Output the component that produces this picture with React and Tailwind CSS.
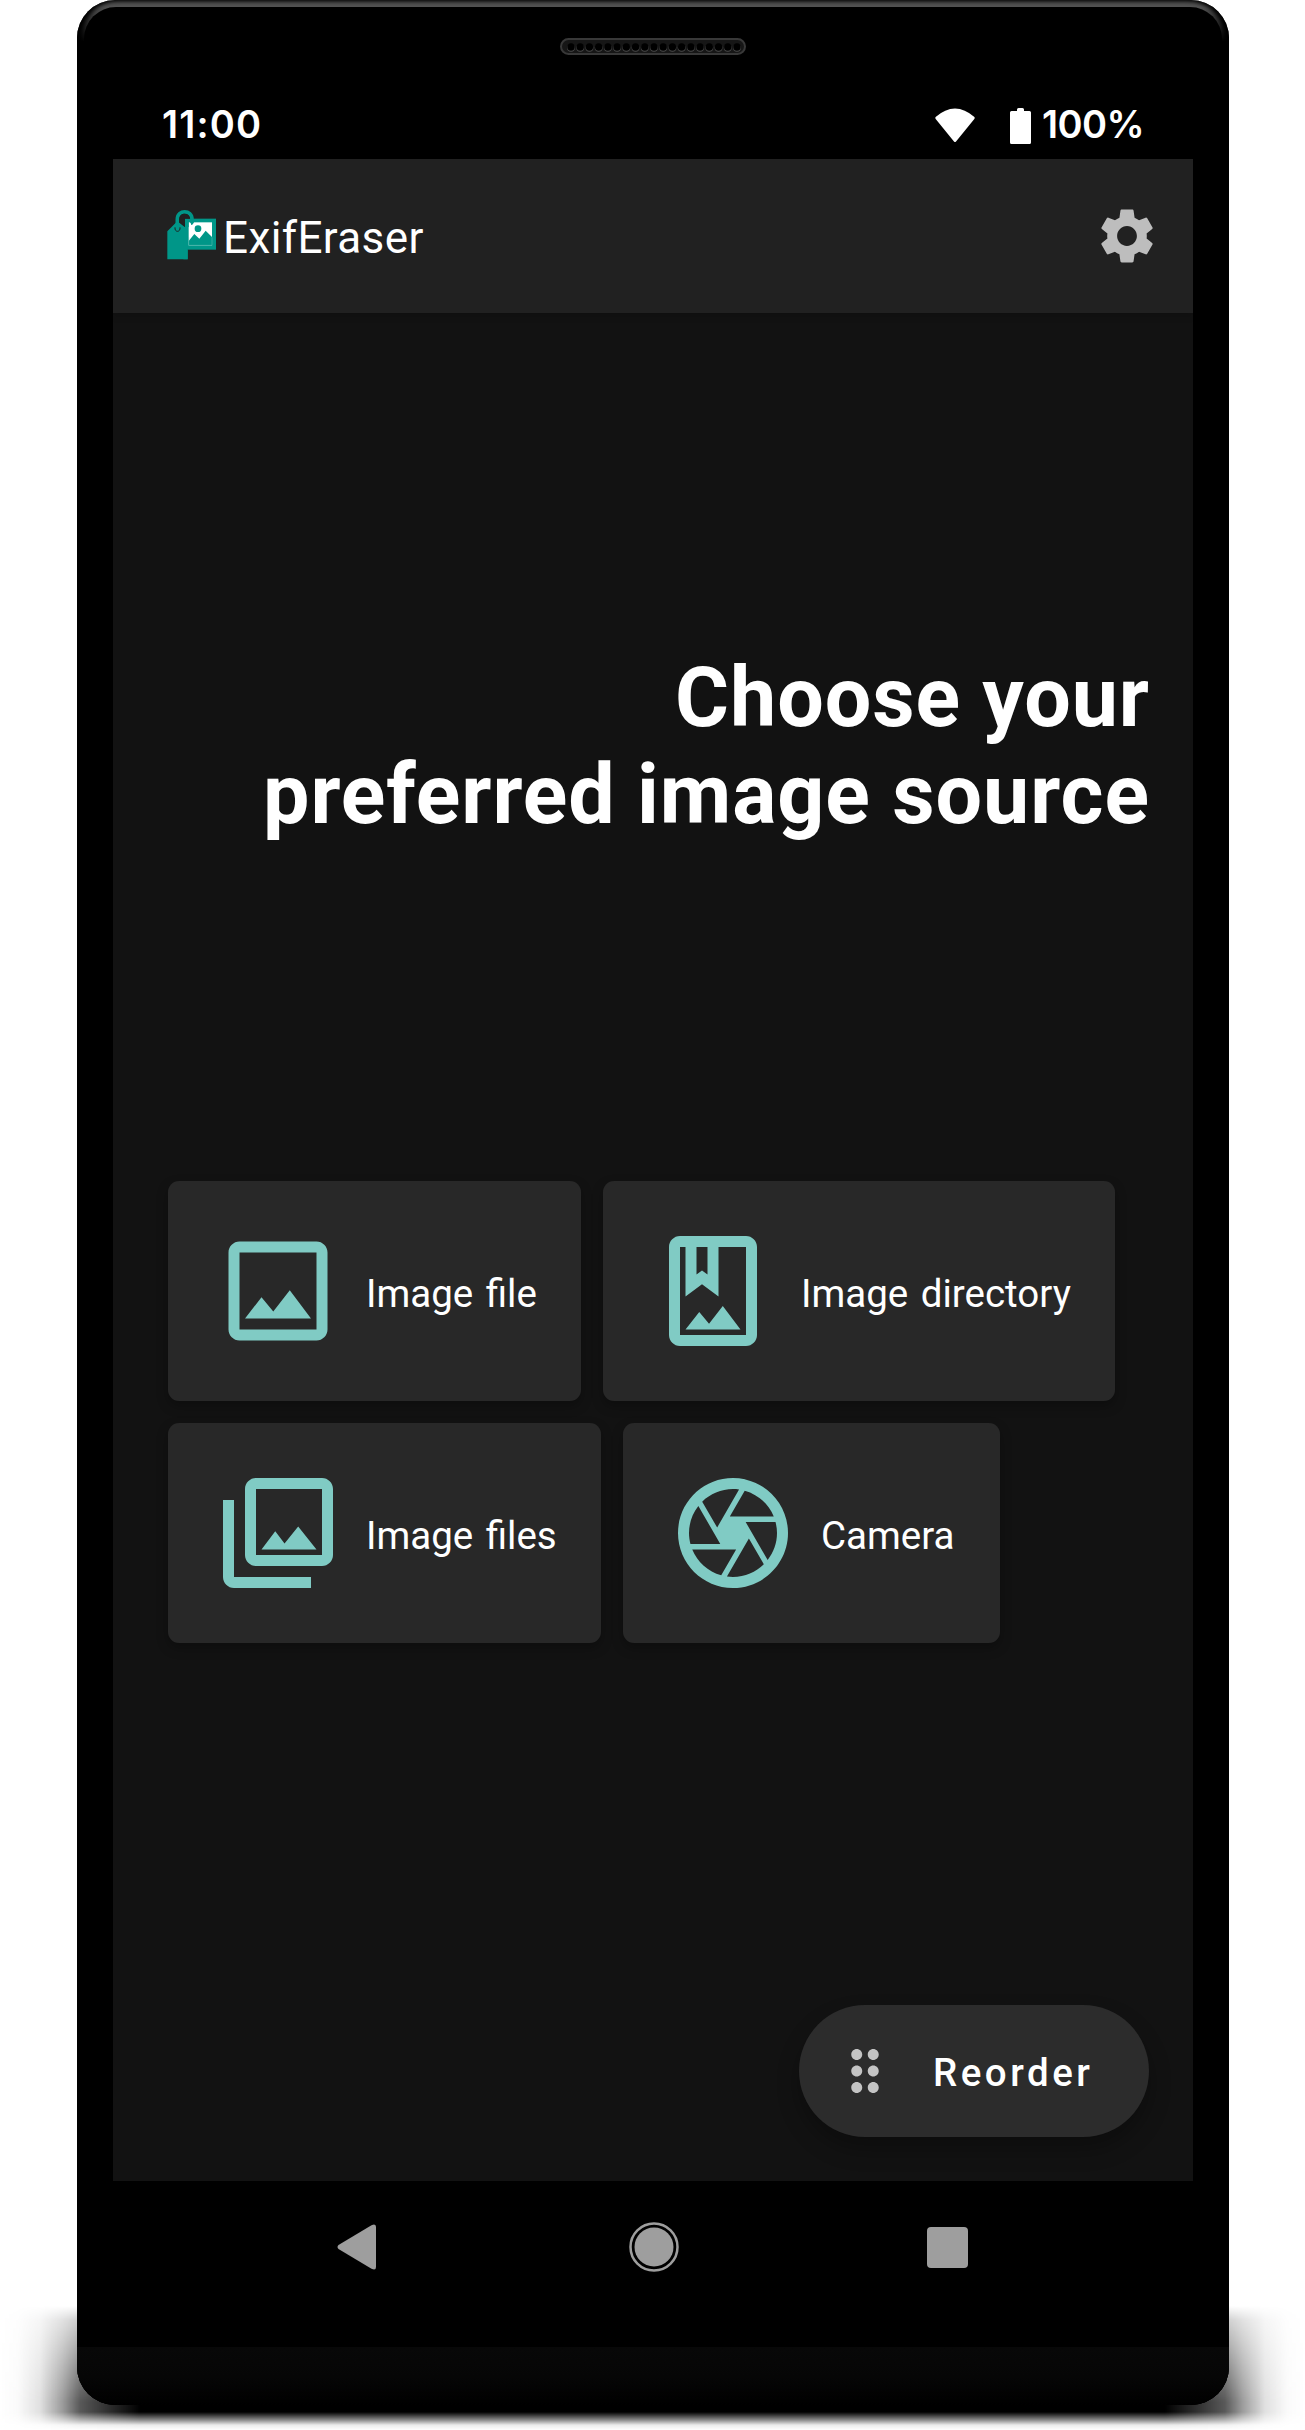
import React from "react";

const ICONS = {
  image:
    "M19 5v14H5V5h14m0-2H5c-1.1 0-2 .9-2 2v14c0 1.1.9 2 2 2h14c1.1 0 2-.9 2-2V5c0-1.1-.9-2-2-2zm-4.86 8.86l-3 3.87L9 13.14 6 17h12l-3.86-5.14z",
  album:
    "M18 2H6c-1.1 0-2 .9-2 2v16c0 1.1.9 2 2 2h12c1.1 0 2-.9 2-2V4c0-1.1-.9-2-2-2zM9 4h2v5l-1-.75L9 9V4zm9 16H6V4h1v9l3-2.25L13 13V4h5v16zm-6.72-2.04L9.5 15.81 7 19h10l-3.22-4.26z",
  library:
    "M20 4v12H8V4h12m0-2H8c-1.1 0-2 .9-2 2v12c0 1.1.9 2 2 2h12c1.1 0 2-.9 2-2V4c0-1.1-.9-2-2-2zm-8.5 9.67l1.69 2.26 2.48-3.1L19 15H9zM2 6v14c0 1.1.9 2 2 2h14v-2H4V6H2z",
  camera:
    "M14.25 2.26l-.08-.04-.01.02C13.46 2.09 12.74 2 12 2 6.48 2 2 6.48 2 12s4.48 10 10 10 10-4.48 10-10c0-4.75-3.31-8.72-7.75-9.74zM19.41 9h-7.99l2.71-4.7c2.4.66 4.35 2.42 5.28 4.7zM13.1 4.08L10.27 9l-1.15 2L6.4 6.3C7.84 4.88 9.82 4 12 4c.37 0 .74.03 1.1.08zM5.7 7.09L8.54 12l1.15 2H4.26C4.1 13.36 4 12.69 4 12c0-1.85.64-3.55 1.7-4.91zM4.59 15h7.98l-2.71 4.7c-2.4-.67-4.34-2.42-5.27-4.7zm6.31 4.91L14.89 13l2.72 4.7C16.16 19.12 14.18 20 12 20c-.38 0-.74-.04-1.1-.09zm7.4-3l-4-6.91h5.43c.17.64.27 1.31.27 2 0 1.85-.64 3.55-1.7 4.91z",
  settings:
    "M19.14 12.94c.04-.3.06-.61.06-.94 0-.32-.02-.64-.07-.94l2.03-1.58c.18-.14.23-.41.12-.61l-1.92-3.32c-.12-.22-.37-.29-.59-.22l-2.39.96c-.5-.38-1.03-.7-1.62-.94l-.36-2.54c-.04-.24-.24-.41-.48-.41h-3.84c-.24 0-.43.17-.47.41l-.36 2.54c-.59.24-1.13.57-1.62.94l-2.39-.96c-.22-.08-.47 0-.59.22L2.74 8.87c-.12.21-.08.47.12.61l2.03 1.58c-.05.3-.09.63-.09.94s.02.64.07.94l-2.03 1.58c-.18.14-.23.41-.12.61l1.92 3.32c.12.22.37.29.59.22l2.39-.96c.5.38 1.03.7 1.62.94l.36 2.54c.05.24.24.41.48.41h3.84c.24 0 .44-.17.47-.41l.36-2.54c.59-.24 1.13-.56 1.62-.94l2.39.96c.22.08.47 0 .59-.22l1.92-3.32c.12-.22.07-.47-.12-.61l-2.01-1.58zM12 15.6c-1.98 0-3.6-1.62-3.6-3.6s1.62-3.6 3.6-3.6 3.6 1.62 3.6 3.6-1.62 3.6-3.6 3.6z",
  drag: "M11 18c0 1.1-.9 2-2 2s-2-.9-2-2 .9-2 2-2 2 .9 2 2zm-2-8c-1.1 0-2 .9-2 2s.9 2 2 2 2-.9 2-2-.9-2-2-2zm0-6c-1.1 0-2 .9-2 2s.9 2 2 2 2-.9 2-2-.9-2-2-2zm6 4c1.1 0 2-.9 2-2s-.9-2-2-2-2 .9-2 2 .9 2 2 2zm0 2c-1.1 0-2 .9-2 2s.9 2 2 2 2-.9 2-2-.9-2-2-2zm0 6c-1.1 0-2 .9-2 2s.9 2 2 2 2-.9 2-2-.9-2-2-2z",
};

function Icon({ name, className }) {
  return (
    <svg viewBox="0 0 24 24" fill="currentColor" className={className}>
      <path d={ICONS[name]} />
    </svg>
  );
}

function SourceCard({ icon, label, width }) {
  return (
    <button
      className={`${width} flex h-[220px] shrink-0 items-center rounded-[11px] bg-[#282828] pl-11 shadow-[0_5px_12px_rgba(0,0,0,0.28)]`}
    >
      <Icon name={icon} className="size-[132px] shrink-0 text-[#80cbc4]" />
      <span className="ml-[22px] pt-[5px] text-[38.5px] leading-[45px] [word-spacing:3px] whitespace-nowrap text-white">
        {label}
      </span>
    </button>
  );
}

function Speaker() {
  return (
    <svg width="186" height="18" viewBox="0 0 186 18" className="block">
      <rect x="1" y="1" width="184" height="15" rx="7.500" fill="#161616" stroke="#383838" strokeWidth="2" />
      {Array.from({ length: 19 }, (_, i) => (
        <g key={i}>
          <circle cx={11 + i * 9.22} cy="9.8" r="3.9" fill="#4a4a4a" />
          <circle cx={11 + i * 9.22} cy="9" r="3.7" fill="#000" />
        </g>
      ))}
    </svg>
  );
}

function Logo() {
  return (
    <svg width="50" height="51" viewBox="51 57 150 153" className="mb-[3px] block shrink-0">
      <rect x="105" y="86" width="93" height="93" fill="#009688" />
      <rect x="116" y="97" width="70" height="69" fill="#fff" />
      <path d="M116 153 L133 132 L148 146 L167 122 L186 141 V166 H116Z" fill="#009688" />
      <path d="M116 142V166H186V142" fill="none" stroke="#4db6ac" strokeWidth="2" />
      <circle cx="144" cy="116" r="10" fill="#009688" />
      <path d="M105 86H116V112L105 104Z" fill="#009688" />
      <path d="M112 92H131V97Q130 106 124 105L121 97Z" fill="#009688" />
      <path d="M52 124 L82 94 L105 112 V179 H113 V208 H52Z" fill="#009688" />
      <path d="M105 110L113 118V208H100V110Z" fill="#009688" />
      <path d="M82 116V88C82 58 126 58 126 88V98" fill="none" stroke="#009688" strokeWidth="11" />
      <path d="M87.500 98V88C89 67 115 65 120 86H105V111L91 98Z" fill="#212121" />
      <path d="M75 112C73 128 92 128 90 112" fill="none" stroke="#212121" strokeWidth="3" />
    </svg>
  );
}

export default function App() {
  return (
    <div className="relative isolate flex h-[2430px] w-[1305px] overflow-hidden bg-white pl-[77px] font-['Roboto',sans-serif] text-white">
      {/* ground shadow */}
      <div className="absolute top-[2306px] left-0 -z-10 h-[124px] w-full [mask-image:linear-gradient(to_bottom,transparent,rgba(0,0,0,.3)_14px,rgba(0,0,0,.7)_60px,#000_96px,#000_106px,rgba(0,0,0,.45)_114px,rgba(0,0,0,.08)_119px,transparent)]">
        <div className="h-full w-full bg-[linear-gradient(to_right,transparent_0,rgba(0,0,0,.02)_18px,rgba(0,0,0,.12)_40px,rgba(0,0,0,.38)_62px,rgba(0,0,0,.65)_80px,#000_140px,#000_1165px,rgba(0,0,0,.65)_1225px,rgba(0,0,0,.38)_1243px,rgba(0,0,0,.12)_1265px,rgba(0,0,0,.02)_1287px,transparent_1305px)]" />
      </div>

      <div className="flex h-[2405px] w-[1152px] flex-col overflow-hidden rounded-[38px] bg-[linear-gradient(to_bottom,#444_0,#525252_7px,#000_42px)] px-[7px] pt-[7px] shadow-[inset_5px_0_4px_#000,inset_-5px_0_4px_#000]">
        <div className="flex flex-1 flex-col rounded-t-[32px] bg-black px-[29px]">
          <div className="flex h-[49px] justify-center pt-[31px]">
            <Speaker />
          </div>

          {/* status bar */}
          <div className="flex h-[103px] items-start justify-between pt-[45px] pr-[49px] pl-[49px] font-['Inter',sans-serif] text-[38px] leading-[46px] font-semibold">
            <span className="tracking-[1.2px]">11:00</span>
            <div className="flex items-start">
              <svg width="40" height="35" viewBox="0 0 40 35" className="mt-[7px] mr-[35px]">
                <path d="M.6 9Q20-8 39.400 9Q40 10 39.300 11L21 33.500Q20 34.500 19 33.500L.7 11Q0 10 .6 9Z" fill="#fff" />
              </svg>
              <svg width="21" height="36" viewBox="0 0 21 36" className="mt-[7px] mr-[11px]">
                <path d="M8.500 0h4Q14 0 14 1.500V3h5.500Q21 3 21 4.500v30Q21 36 19.500 36h-18Q0 36 0 34.500v-30Q0 3 1.500 3H7V1.500Q7 0 8.500 0Z" fill="#fff" />
              </svg>
              <span className="tracking-[-0.6px]">100%</span>
            </div>
          </div>

          {/* app screen */}
          <div className="flex h-[2022px] w-[1080px] flex-col bg-[#121212]">
            <header className="flex h-[154px] items-center justify-between bg-[#212121] pr-[33px] pl-[54px] shadow-[0_2px_8px_rgba(0,0,0,0.2)]">
              <div className="flex items-center">
                <Logo />
                <span className="ml-[6px] pt-[3px] text-[44px] leading-[52px] tracking-[0.4px]">ExifEraser</span>
              </div>
              <Icon name="settings" className="size-[66px] text-[#bdbdbd]" />
            </header>

            <h1 className="mt-[336px] pr-[43px] text-right text-[82.5px] leading-[97px] font-bold tracking-[0.93px]">
              Choose your
              <br />
              preferred image source
            </h1>

            <div className="mt-[338px] flex flex-col gap-[22px] pl-[55px]">
              <div className="flex gap-[22px]">
                <SourceCard icon="image" label="Image file" width="w-[413px]" />
                <SourceCard icon="album" label="Image directory" width="w-[512px]" />
              </div>
              <div className="flex gap-[22px]">
                <SourceCard icon="library" label="Image files" width="w-[433px]" />
                <SourceCard icon="camera" label="Camera" width="w-[377px]" />
              </div>
            </div>

            <button className="mt-auto mr-11 mb-11 flex h-[132px] w-[350px] items-center self-end rounded-full bg-[#2c2c2c] pl-[33px] shadow-[0_12px_22px_rgba(0,0,0,0.28)]">
              <Icon name="drag" className="size-[66px] text-[#c4c4c4]" />
              <span className="ml-[35px] pt-[3px] text-[38.5px] leading-[45px] font-medium tracking-[3.5px]">Reorder</span>
            </button>
          </div>

          {/* navigation bar */}
          <nav className="flex h-[132px] items-center pl-[224px] text-[#9e9e9e]">
            <svg width="40" height="46" viewBox="0 0 40 46" fill="currentColor">
              <path d="M1.500 21L34.500 1.200Q39 -1 39 3V43Q39 47 34.500 44.800L1.500 25Q-.5 23 1.500 21Z" />
            </svg>
            <svg width="50" height="50" viewBox="0 0 50 50" fill="currentColor" className="ml-[252px]">
              <circle cx="25" cy="25" r="23.500" fill="none" stroke="currentColor" strokeWidth="2.500" />
              <circle cx="25" cy="25" r="19.500" />
            </svg>
            <div className="ml-[248px] size-[41px] rounded-[4px] bg-[#9e9e9e]" />
          </nav>

          <div className="-mx-9 mt-[34px] flex-1 bg-[linear-gradient(to_bottom,#080808,#060606_30px,#000)]" />
        </div>
      </div>
    </div>
  );
}
